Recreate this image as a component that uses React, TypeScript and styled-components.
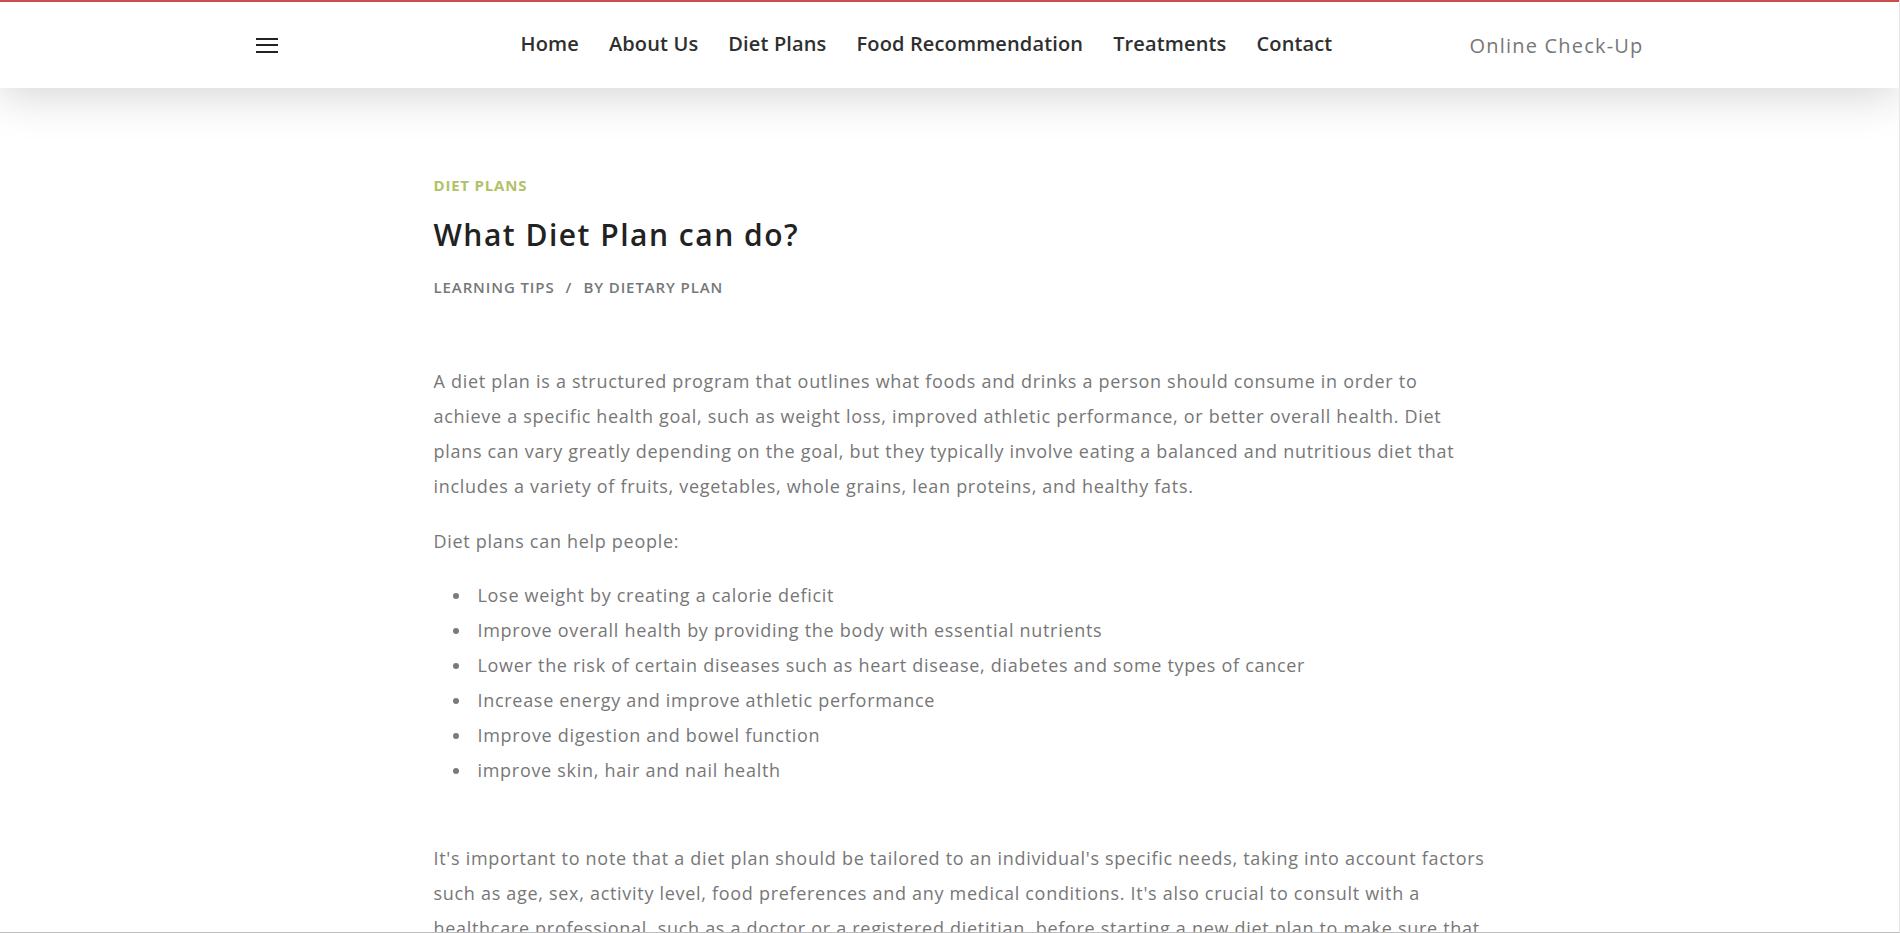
import React from "react";
import styled, { createGlobalStyle } from "styled-components";

const GlobalStyle = createGlobalStyle`
  html, body {
    margin: 0;
    padding: 0;
    background: #ffffff;
  }
  body {
    font-family: "Open Sans", "Liberation Sans", sans-serif;
    -webkit-font-smoothing: antialiased;
  }
  *, *::before, *::after {
    box-sizing: border-box;
  }
`;

const Frame = styled.div`
  height: 100vh;
  overflow: hidden;
  background: #ffffff;
  border-right: 1px solid #e6e6e6;
  border-bottom: 1px solid #bcbcbc;
`;

const Header = styled.header`
  position: relative;
  z-index: 2;
  height: 88px;
  background: #ffffff;
  border-top: 2px solid #cc4b4b;
  box-shadow: 0 8px 45px rgba(0, 0, 0, 0.17);
  display: flex;
  align-items: center;
`;

const HeaderInner = styled.div`
  width: 1388px;
  margin: 0 auto;
  display: grid;
  grid-template-columns: 250px auto 1fr;
  align-items: center;
`;

const MenuButton = styled.button`
  width: 22px;
  height: 15px;
  padding: 0;
  border: 0;
  background: transparent;
  display: flex;
  flex-direction: column;
  justify-content: space-between;
  cursor: pointer;
`;

const MenuBar = styled.span`
  display: block;
  width: 100%;
  height: 2px;
  background: #222222;
`;

const Nav = styled.nav`
  display: flex;
  align-items: center;
  margin-top: -3px;
`;

const NavLink = styled.a`
  padding: 0 15px;
  font-size: 20px;
  line-height: 28px;
  font-weight: 600;
  letter-spacing: 0.14px;
  color: #2f2f2f;
  text-decoration: none;
`;

const CheckUp = styled.a`
  justify-self: end;
  margin-top: 1px;
  font-size: 20px;
  line-height: 28px;
  font-weight: 400;
  letter-spacing: 1.2px;
  color: #777777;
  text-decoration: none;
`;

const Article = styled.main`
  width: 1032px;
  margin: 0 auto;
  padding-top: 87px;
`;

const Category = styled.div`
  font-size: 15px;
  line-height: 20px;
  font-weight: 700;
  letter-spacing: 0.8px;
  text-transform: uppercase;
  color: #b1c266;
`;

const Title = styled.h1`
  margin: 20px 0 0;
  font-size: 30px;
  line-height: 40px;
  font-weight: 600;
  letter-spacing: 1.5px;
  color: #222222;
`;

const Meta = styled.div`
  margin-top: 22px;
  display: flex;
  font-size: 15px;
  line-height: 20px;
  font-weight: 600;
  letter-spacing: 0.9px;
  text-transform: uppercase;
  color: #777777;
`;

const MetaSep = styled.span`
  margin: 0 11px;
`;

const Body = styled.div`
  width: 1053px;
  margin-top: 67px;
  font-size: 18px;
  line-height: 35px;
  letter-spacing: 0.7px;
  color: #777777;
`;

const Para = styled.p<{ $gap?: number }>`
  margin: 0 0 ${(p) => p.$gap ?? 20}px;
`;

const List = styled.ul`
  margin: 0 0 53px;
  padding: 0 0 0 19px;
  list-style: none;
`;

const Item = styled.li`
  display: flex;
  align-items: center;

  &::before {
    content: "";
    flex-shrink: 0;
    width: 6px;
    height: 6px;
    margin-right: 19px;
    border-radius: 50%;
    background: #7a7a7a;
  }
`;

const navItems = [
  "Home",
  "About Us",
  "Diet Plans",
  "Food Recommendation",
  "Treatments",
  "Contact",
];

const benefits = [
  "Lose weight by creating a calorie deficit",
  "Improve overall health by providing the body with essential nutrients",
  "Lower the risk of certain diseases such as heart disease, diabetes and some types of cancer",
  "Increase energy and improve athletic performance",
  "Improve digestion and bowel function",
  "improve skin, hair and nail health",
];

export default function App() {
  return (
    <>
      <GlobalStyle />
      <Frame>
        <Header>
          <HeaderInner>
            <div>
              <MenuButton aria-label="Menu">
                <MenuBar />
                <MenuBar />
                <MenuBar />
              </MenuButton>
            </div>
            <Nav>
              {navItems.map((item) => (
                <NavLink key={item} href="#">
                  {item}
                </NavLink>
              ))}
            </Nav>
            <CheckUp href="#">Online Check-Up</CheckUp>
          </HeaderInner>
        </Header>
        <Article>
          <Category>Diet Plans</Category>
          <Title>What Diet Plan can do?</Title>
          <Meta>
            <span>Learning Tips</span>
            <MetaSep>/</MetaSep>
            <span>By Dietary Plan</span>
          </Meta>
          <Body>
            <Para>
              A diet plan is a structured program that outlines what foods and
              drinks a person should consume in order to achieve a specific
              health goal, such as weight loss, improved athletic performance,
              or better overall health. Diet plans can vary greatly depending on
              the goal, but they typically involve eating a balanced and
              nutritious diet that includes a variety of fruits, vegetables,
              whole grains, lean proteins, and healthy fats.
            </Para>
            <Para $gap={19}>Diet plans can help people:</Para>
            <List>
              {benefits.map((b) => (
                <Item key={b}>{b}</Item>
              ))}
            </List>
            <Para>
              It's important to note that a diet plan should be tailored to an
              individual's specific needs, taking into account factors such as
              age, sex, activity level, food preferences and any medical
              conditions. It's also crucial to consult with a healthcare
              professional, such as a doctor or a registered dietitian, before
              starting a new diet plan to make sure that it is safe and
              appropriate for them.
            </Para>
          </Body>
        </Article>
      </Frame>
    </>
  );
}
